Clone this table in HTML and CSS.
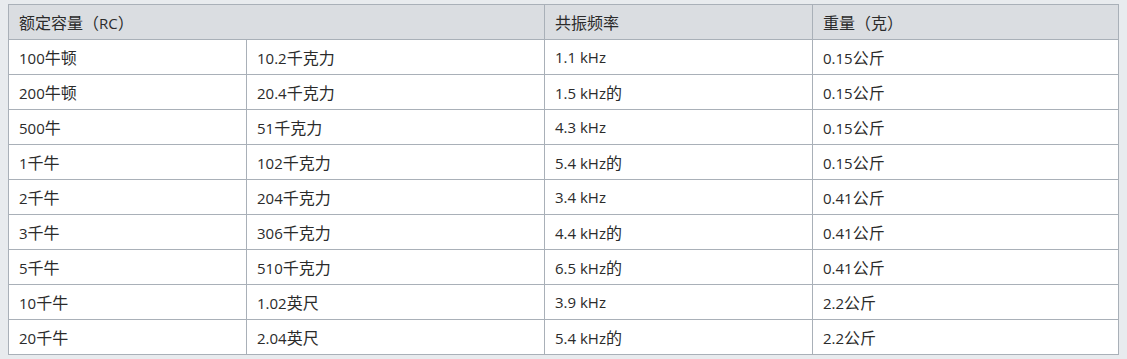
FILE: index.html
```html
<!DOCTYPE html>
<html lang="zh">
<head>
<meta charset="utf-8">
<title>额定容量</title>
<link rel="stylesheet" href="styles.css">
</head>
<body>
<div class="wrap">
<table class="spec">
<colgroup>
<col class="c1"><col class="c2"><col class="c3"><col class="c4">
</colgroup>
<thead>
<tr><th colspan="2"><span class="zh">额定容量（</span>RC<span class="zh">）</span></th><th><span class="zh">共振频率</span></th><th><span class="zh">重量（克）</span></th></tr>
</thead>
<tbody>
<tr><td>100<span class="zh">牛顿</span></td><td>10.2<span class="zh">千克力</span></td><td>1.1 kHz</td><td>0.15<span class="zh">公斤</span></td></tr>
<tr><td>200<span class="zh">牛顿</span></td><td>20.4<span class="zh">千克力</span></td><td>1.5 kHz<span class="zh">的</span></td><td>0.15<span class="zh">公斤</span></td></tr>
<tr><td>500<span class="zh">牛</span></td><td>51<span class="zh">千克力</span></td><td>4.3 kHz</td><td>0.15<span class="zh">公斤</span></td></tr>
<tr><td>1<span class="zh">千牛</span></td><td>102<span class="zh">千克力</span></td><td>5.4 kHz<span class="zh">的</span></td><td>0.15<span class="zh">公斤</span></td></tr>
<tr><td>2<span class="zh">千牛</span></td><td>204<span class="zh">千克力</span></td><td>3.4 kHz</td><td>0.41<span class="zh">公斤</span></td></tr>
<tr><td>3<span class="zh">千牛</span></td><td>306<span class="zh">千克力</span></td><td>4.4 kHz<span class="zh">的</span></td><td>0.41<span class="zh">公斤</span></td></tr>
<tr><td>5<span class="zh">千牛</span></td><td>510<span class="zh">千克力</span></td><td>6.5 kHz<span class="zh">的</span></td><td>0.41<span class="zh">公斤</span></td></tr>
<tr><td>10<span class="zh">千牛</span></td><td>1.02<span class="zh">英尺</span></td><td>3.9 kHz</td><td>2.2<span class="zh">公斤</span></td></tr>
<tr><td>20<span class="zh">千牛</span></td><td>2.04<span class="zh">英尺</span></td><td>5.4 kHz<span class="zh">的</span></td><td>2.2<span class="zh">公斤</span></td></tr>
</tbody>
</table>
</div>
</body>
</html>
```
FILE: styles.css
```css
html, body {
  margin: 0;
  padding: 0;
  background: #e8ebee;
}
.wrap {
  padding: 4px 0 0 8px;
}
.spec {
  border-collapse: collapse;
  table-layout: fixed;
  width: 1110px;
  background: #ffffff;
  color: #2b2b2b;
  font-family: "Open Sans", "Noto Sans CJK SC", sans-serif;
  font-size: 15px;
  line-height: 20px;
  border: 1px solid #a9b0b8;
}
.c1 { width: 238px; }
.c2 { width: 298px; }
.c3 { width: 268px; }
.c4 { width: 306px; }
.spec th,
.spec td {
  border: 1px solid #a9b0b8;
  height: 35px;
  padding: 0 10px;
  text-align: left;
  font-weight: normal;
  vertical-align: middle;
  white-space: nowrap;
  box-sizing: border-box;
}
.spec th {
  background: #dadde1;
}
.zh {
  font-family: "Noto Sans CJK SC", sans-serif;
  font-size: 16px;
  line-height: 20px;
}
```
